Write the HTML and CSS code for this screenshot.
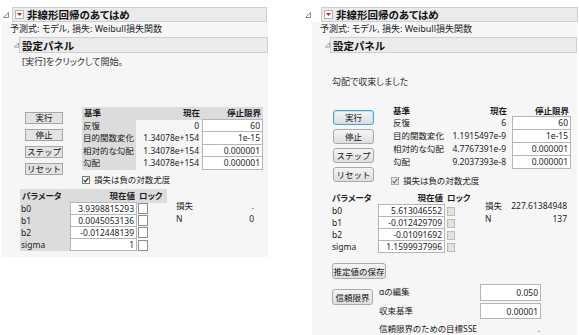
FILE: index.html
```html
<!DOCTYPE html>
<html lang="ja">

<head>
    <meta charset="UTF-8">
    <title>非線形回帰のあてはめ</title>
    <link rel="stylesheet" href="styles.css">
</head>

<body>
    <div class="page">

        <!-- Before run -->
        <section class="report report-left">
            <div class="outline">
                <span class="twisty"><svg width="6" height="6" viewBox="0 0 6 6"><polygon points="5.5,0.5 5.5,5.5 0.5,5.5" fill="#fff" stroke="#8a8a8a" stroke-width="1"/></svg></span>
                <div class="outline-title">
                    <span class="menu-icon"><svg width="7" height="7" viewBox="0 0 7 7"><polygon points="1,2 6,2 3.5,5" fill="#d21a1a"/></svg></span>
                    非線形回帰のあてはめ
                </div>
            </div>
            <div class="report-body">
                <p class="caption">予測式: モデル, 損失: Weibull損失関数</p>
                <div class="outline sub">
                    <span class="twisty"><svg width="6" height="6" viewBox="0 0 6 6"><polygon points="5.5,0.5 5.5,5.5 0.5,5.5" fill="#fff" stroke="#8a8a8a" stroke-width="1"/></svg></span>
                    <div class="outline-title">設定パネル</div>
                </div>
                <p class="status">[実行]をクリックして開始。</p>
                <div class="control-row">
                    <div class="buttons">
                        <button>実行</button>
                        <button>停止</button>
                        <button>ステップ</button>
                        <button>リセット</button>
                    </div>
                    <div class="criteria">
                        <div class="crit-table">
                            <div class="th">基準</div>
                            <div class="th num">現在</div>
                            <div class="th num">停止限界</div>
                            <div class="lbl">反復</div>
                            <div class="cur">0</div>
                            <div class="inp">60</div>
                            <div class="lbl">目的関数変化</div>
                            <div class="cur">1.34078e+154</div>
                            <div class="inp">1e-15</div>
                            <div class="lbl">相対的な勾配</div>
                            <div class="cur">1.34078e+154</div>
                            <div class="inp">0.000001</div>
                            <div class="lbl">勾配</div>
                            <div class="cur">1.34078e+154</div>
                            <div class="inp">0.000001</div>
                        </div>
                        <div class="check">
                            <span class="box"><svg width="6" height="6" viewBox="0 0 6 6"><path d="M0.6 3.2 L2.3 4.9 L5.4 0.8" fill="none" stroke="#222" stroke-width="1.1"/></svg></span>
                            損失は負の対数尤度
                        </div>
                    </div>
                </div>
                <div class="param-row">
                    <div class="param-table">
                        <div class="th">パラメータ</div>
                        <div class="th num">現在値</div>
                        <div class="th">ロック</div>
                        <div class="lbl">b0</div>
                        <div class="inp">3.9398815293</div>
                        <div class="lock"><span class="lock-box"></span></div>
                        <div class="lbl">b1</div>
                        <div class="inp">0.0045053136</div>
                        <div class="lock"><span class="lock-box"></span></div>
                        <div class="lbl">b2</div>
                        <div class="inp">-0.012448139</div>
                        <div class="lock"><span class="lock-box"></span></div>
                        <div class="lbl">sigma</div>
                        <div class="inp">1</div>
                        <div class="lock"><span class="lock-box"></span></div>
                    </div>
                    <div class="stats">
                        <div class="stat"><span>損失</span><span>.</span></div>
                        <div class="stat"><span>N</span><span>0</span></div>
                    </div>
                </div>
            </div>
        </section>

        <!-- After convergence -->
        <section class="report report-right">
            <div class="outline">
                <span class="twisty"><svg width="6" height="6" viewBox="0 0 6 6"><polygon points="5.5,0.5 5.5,5.5 0.5,5.5" fill="#fff" stroke="#8a8a8a" stroke-width="1"/></svg></span>
                <div class="outline-title">
                    <span class="menu-icon"><svg width="7" height="7" viewBox="0 0 7 7"><polygon points="1,2 6,2 3.5,5" fill="#d21a1a"/></svg></span>
                    非線形回帰のあてはめ
                </div>
            </div>
            <div class="report-body">
                <p class="caption">予測式: モデル, 損失: Weibull損失関数</p>
                <div class="outline sub">
                    <span class="twisty"><svg width="6" height="6" viewBox="0 0 6 6"><polygon points="5.5,0.5 5.5,5.5 0.5,5.5" fill="#fff" stroke="#8a8a8a" stroke-width="1"/></svg></span>
                    <div class="outline-title">設定パネル</div>
                </div>
                <p class="status">勾配で収束しました</p>
                <div class="control-row">
                    <div class="buttons">
                        <button class="focused">実行</button>
                        <button>停止</button>
                        <button>ステップ</button>
                        <button>リセット</button>
                    </div>
                    <div class="criteria">
                        <div class="crit-table">
                            <div class="th">基準</div>
                            <div class="th num">現在</div>
                            <div class="th num">停止限界</div>
                            <div class="lbl">反復</div>
                            <div class="cur">6</div>
                            <div class="inp">60</div>
                            <div class="lbl">目的関数変化</div>
                            <div class="cur">1.1915497e-9</div>
                            <div class="inp">1e-15</div>
                            <div class="lbl">相対的な勾配</div>
                            <div class="cur">4.7767391e-9</div>
                            <div class="inp">0.000001</div>
                            <div class="lbl">勾配</div>
                            <div class="cur">9.2037393e-8</div>
                            <div class="inp">0.000001</div>
                        </div>
                        <div class="check">
                            <span class="box"><svg width="6" height="6" viewBox="0 0 6 6"><path d="M0.6 3.2 L2.3 4.9 L5.4 0.8" fill="none" stroke="#5a6b80" stroke-width="1.1"/></svg></span>
                            損失は負の対数尤度
                        </div>
                    </div>
                </div>
                <div class="param-row">
                    <div class="param-table">
                        <div class="th">パラメータ</div>
                        <div class="th num">現在値</div>
                        <div class="th">ロック</div>
                        <div class="lbl">b0</div>
                        <div class="inp">5.613046552</div>
                        <div class="lock"><span class="lock-box"></span></div>
                        <div class="lbl">b1</div>
                        <div class="inp">-0.012429709</div>
                        <div class="lock"><span class="lock-box"></span></div>
                        <div class="lbl">b2</div>
                        <div class="inp">-0.01091692</div>
                        <div class="lock"><span class="lock-box"></span></div>
                        <div class="lbl">sigma</div>
                        <div class="inp">1.1599937996</div>
                        <div class="lock"><span class="lock-box"></span></div>
                    </div>
                    <div class="stats">
                        <div class="stat"><span>損失</span><span>227.61384948</span></div>
                        <div class="stat"><span>N</span><span>137</span></div>
                    </div>
                </div>
                <button class="save-btn">推定値の保存</button>
                <div class="conf-row">
                    <button>信頼限界</button>
                    <div class="conf-form">
                        <div class="lbl">αの編集</div>
                        <div class="inp">0.050</div>
                        <div class="lbl">収束基準</div>
                        <div class="inp">0.00001</div>
                        <div class="lbl">信頼限界のための目標SSE</div>
                        <div class="val">.</div>
                    </div>
                </div>
            </div>
        </section>

    </div>
</body>

</html>
```

FILE: styles.css
```css
/* Page */
body {
    margin: 0;
    background: #ffffff;
    font-family: "Noto Sans", "Noto Sans CJK JP", sans-serif;
    font-size: 9px;
    color: #1e1e1e;
    font-feature-settings: "palt";
    overflow: hidden;
}

p {
    margin: 0;
}

.page {
    display: flex;
    align-items: flex-start;
    height: 335px;
}

.report-left {
    width: 268px;
}

.report-right {
    width: 279px;
    margin-left: 32px;
}

/* Outline headers */
.outline {
    display: flex;
    align-items: center;
}

.report > .outline {
    height: 15px;
    margin-top: 7px;
}

.outline.sub {
    height: 16px;
    margin-top: 1px;
}

.twisty {
    flex: none;
    display: flex;
    align-items: center;
    height: 100%;
}

.report-left > .outline .twisty {
    width: 9px;
    padding-left: 3px;
}

.report-right > .outline .twisty {
    width: 16px;
    padding-left: 5px;
}

.report-left .outline.sub .twisty {
    width: 5px;
    padding-left: 12px;
}

.report-right .outline.sub .twisty {
    width: 5px;
    padding-left: 13px;
}

.outline-title {
    flex: 1;
    height: 100%;
    box-sizing: border-box;
    display: flex;
    align-items: center;
    background: #ebebeb;
    border: 1px solid #cfcfcf;
    font-size: 10.5px;
    font-weight: bold;
    color: #111;
    padding-left: 2px;
    margin-right: 1px;
}

.outline.sub .outline-title {
    margin-right: 0;
}

.menu-icon {
    width: 7px;
    height: 7px;
    margin-right: 3px;
    border: 1px solid #b4b4b4;
    background: #fff;
    display: flex;
}

/* Report body */
.report-body {
    background: #f6f6f6;
    padding-bottom: 6px;
}

.report-left .report-body {
    margin-left: 2px;
}

.report-right .report-body {
    margin-left: 12px;
    margin-right: 2px;
    height: 313px;
}

.caption {
    line-height: 14px;
    padding-left: 8px;
    color: #222;
}

.status {
    line-height: 12px;
    margin-left: 20px;
    margin-top: 3px;
    color: #333;
}

.report-right .status {
    margin-top: 23px;
}

/* Buttons */
button {
    font-family: inherit;
    font-size: 8.5px;
    color: #111;
    padding: 0;
    display: block;
    white-space: nowrap;
}

.report-left button {
    width: 38px;
    height: 12px;
    line-height: 10px;
    background: #e3e3e3;
    border: 1px solid #a6a6a6;
    border-radius: 0;
}

.report-right button {
    width: 41px;
    height: 15px;
    line-height: 13px;
    background: linear-gradient(#f4f4f4, #dedede);
    border: 1px solid #a9a9a9;
    border-radius: 3px;
}

.report-right button.focused {
    border-color: #4aa3d8;
    box-shadow: inset 0 0 0 1px #bfe2f5;
}

.control-row {
    display: flex;
    align-items: flex-start;
    gap: 19px;
    margin-top: 39px;
    padding-left: 23px;
}

.report-right .control-row {
    margin-top: 17px;
    padding-left: 21px;
}

.buttons {
    display: flex;
    flex-direction: column;
    gap: 5px;
    margin-top: 5px;
}

.report-right .buttons {
    gap: 4px;
}

/* Criteria and parameter tables */
.crit-table,
.param-table,
.check,
.stats,
.conf-form {
    font-size: 8.5px;
}

.crit-table {
    display: grid;
    grid-template-columns: 54px 66px 61px;
    grid-auto-rows: 12.5px;
}

.report-right .crit-table {
    grid-template-columns: 54px 62px 62px;
    grid-template-rows: 12px;
    grid-auto-rows: 13px;
}

.th {
    font-weight: bold;
    line-height: 12px;
    padding: 0 2px;
    white-space: nowrap;
}

.report-right .th:first-child {
    padding-left: 0;
}

.num {
    text-align: right;
}

.report-left .th {
    background: #dcdcdc;
}

.lbl {
    line-height: 12px;
    padding-left: 1px;
    white-space: nowrap;
    color: #222;
}

.report-right .lbl {
    padding-left: 0;
}

.report-left .crit-table .lbl,
.report-left .param-table .lbl {
    background: #dcdcdc;
}

.cur {
    display: flex;
    justify-content: flex-end;
    line-height: 12px;
    padding-right: 3px;
    white-space: nowrap;
}

.inp {
    background: #ffffff;
    border: 1px solid #b5b5b5;
    margin-top: -1px;
    text-align: right;
    padding-right: 2px;
    line-height: 11px;
    white-space: nowrap;
}

.report-right .crit-table .inp {
    margin-left: 3px;
}

/* Checkbox */
.check {
    display: flex;
    align-items: center;
    gap: 4px;
    margin-top: 4px;
    line-height: 12px;
    white-space: nowrap;
    color: #222;
}

.report-right .check {
    margin-top: 6px;
    margin-left: -2px;
}

.box {
    width: 6px;
    height: 6px;
    border: 1px solid #7a7a7a;
    background: #fff;
    display: flex;
}

.report-right .box {
    border-color: #a8a8a8;
    background: #e4e4e4;
}

/* Parameter table */
.param-row {
    display: flex;
    align-items: flex-start;
    margin-top: 3px;
    margin-left: 18px;
    gap: 9px;
}

.report-right .param-row {
    margin-top: 4px;
    margin-left: 20px;
    gap: 13px;
}

.param-table {
    display: grid;
    grid-template-columns: 50px 67px 30px;
    grid-template-rows: 14px;
    grid-auto-rows: 12.2px;
}

.report-right .param-table {
    grid-template-columns: 46px 67px 27px;
    grid-template-rows: 14px;
    grid-auto-rows: 12px;
}

.param-table .th {
    line-height: 14px;
}

.lock {
    display: flex;
    align-items: center;
    padding-left: 1px;
}

.lock-box {
    width: 8px;
    height: 9px;
    border: 1px solid #8c8c8c;
    background: #fff;
}

.report-right .lock-box {
    width: 6px;
    height: 7px;
    border-color: #bdbdbd;
    background: #e2e2e2;
}

.report-right .lock {
    padding-left: 2px;
}

/* Summary stats */
.stats {
    width: 78px;
    margin-top: 10px;
}

.report-right .stats {
    width: 82px;
    margin-top: 8px;
}

.stat {
    display: flex;
    justify-content: space-between;
    line-height: 13px;
}

/* Confidence limits */
.save-btn {
    margin-left: 20px;
    margin-top: 10px;
}

.report-right .save-btn {
    width: 54px;
    height: 16px;
}

.conf-row {
    display: flex;
    align-items: flex-start;
    gap: 6px;
    margin-left: 20px;
    margin-top: 5px;
}

.conf-row button {
    margin-top: 5px;
}

.report-right .conf-row button {
    height: 16px;
}

.conf-form {
    display: grid;
    grid-template-columns: 101px 61px;
    grid-template-rows: 17px 16px 16px;
    row-gap: 2px;
}

.conf-form .lbl {
    line-height: 16px;
}

.conf-form .inp {
    margin-top: 0;
    line-height: 15px;
}

.conf-form .val {
    text-align: right;
    padding-right: 1px;
    line-height: 16px;
}
```
